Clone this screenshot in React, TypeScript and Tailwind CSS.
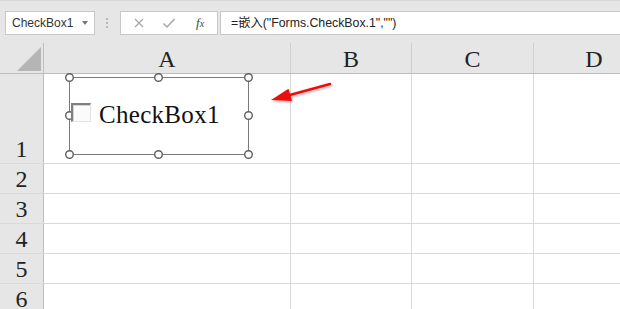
import React from "react";

const serif = { fontFamily: '"Liberation Serif", "Times New Roman", serif' };
const sans = { fontFamily: '"Liberation Sans", Arial, "Noto Sans CJK SC", sans-serif' };

const cols = [
  { label: "A", w: "w-[247px]" },
  { label: "B", w: "w-[121px]" },
  { label: "C", w: "w-[122px]" },
  { label: "D", w: "w-[121px]" },
];

const rows = [
  { n: "1", h: "h-[90px]" },
  { n: "2", h: "h-[30px]" },
  { n: "3", h: "h-[30px]" },
  { n: "4", h: "h-[30px]" },
  { n: "5", h: "h-[30px]" },
  { n: "6", h: "h-[30px]" },
];

function Handle({ x, y }: { x: number; y: number }) {
  return <circle cx={x} cy={y} r={3.8} fill="#fff" stroke="#5f5f5f" strokeWidth={1.4} />;
}

export default function App() {
  return (
    <div className="relative w-[620px] h-[309px] overflow-hidden bg-white" style={sans}>
      {/* Toolbar */}
      <div className="h-[43px] bg-[#e6e6e6] border-t border-[#d6d6d6] flex items-start pt-[10px]">
        <div className="ml-[5px] w-[90px] h-[24px] bg-white border border-[#c8c8c8] flex items-center pl-[6px] pr-[6px]">
          <span className="text-[12px] text-[#333] flex-1">CheckBox1</span>
          <span className="w-0 h-0 border-l-[3.5px] border-r-[3.5px] border-t-[4px] border-l-transparent border-r-transparent border-t-[#777]" />
        </div>
        <div className="ml-[11px] mt-[7px] flex flex-col gap-[2px]">
          <span className="w-[2px] h-[2px] bg-[#b8b8b8]" />
          <span className="w-[2px] h-[2px] bg-[#b8b8b8]" />
          <span className="w-[2px] h-[2px] bg-[#b8b8b8]" />
        </div>
        <div className="ml-[12px] w-[98px] h-[24px] bg-white border border-[#c8c8c8] flex items-center">
          <svg width="12" height="12" viewBox="0 0 12 12" className="ml-[12px]">
            <path d="M2 2 L10 10 M10 2 L2 10" stroke="#a6a6a6" strokeWidth="1.2" />
          </svg>
          <svg width="14" height="12" viewBox="0 0 14 12" className="ml-[17px]">
            <path d="M1.5 6.5 L5 10 L12.5 2" stroke="#a6a6a6" strokeWidth="1.5" fill="none" />
          </svg>
          <span className="ml-[20px] text-[13px] italic text-[#444]" style={serif}>
            f<span className="text-[10px]">x</span>
          </span>
        </div>
        <div className="ml-[2px] flex-1 h-[24px] bg-white border border-[#c8c8c8] border-r-0 flex items-center pl-[10px]">
          <span className="text-[12.3px] text-[#222]" style={{ fontFamily: '"Liberation Sans", Arial, "Noto Sans CJK SC", sans-serif' }}>
            =嵌入("Forms.CheckBox.1","")
          </span>
        </div>
      </div>

      {/* Column header row */}
      <div className="flex h-[31px] bg-[#e6e6e6] border-b border-[#bdbdbd]">
        <div className="w-[44px] shrink-0 border-r border-[#bdbdbd] flex items-end justify-end pr-[1px] pb-[1px]">
          <svg width="25" height="25" viewBox="0 0 25 25">
            <polygon points="24,0 24,24 0,24" fill="#b5b5b5" />
          </svg>
        </div>
        {cols.map((c) => (
          <div
            key={c.label}
            className={`${c.w} shrink-0 border-r border-[#d0d0d0] flex items-end justify-center pb-[1px] text-[24px] leading-[26px] text-[#222]`}
            style={serif}
          >
            {c.label}
          </div>
        ))}
      </div>

      {/* Rows */}
      {rows.map((r) => (
        <div key={r.n} className={`flex ${r.h} border-b border-[#d9d9d9]`}>
          <div
            className="w-[44px] shrink-0 bg-[#e6e6e6] border-r border-[#bdbdbd] flex items-end justify-center text-[24px] leading-[28px] text-[#222]"
            style={serif}
          >
            {r.n}
          </div>
          {cols.map((c) => (
            <div key={c.label} className={`${c.w} shrink-0 border-r border-[#d9d9d9]`} />
          ))}
        </div>
      ))}

      {/* Embedded checkbox control (overlay) */}
      <svg className="absolute left-0 top-0 pointer-events-none" width="620" height="309">
        <rect x="69.5" y="77.5" width="179" height="77" fill="none" stroke="#7a7a7a" strokeWidth="1" />
        <Handle x={69.5} y={77.5} />
        <Handle x={158.5} y={77.5} />
        <Handle x={248.5} y={77.5} />
        <Handle x={69.5} y={115.5} />
        <Handle x={248.5} y={115.5} />
        <Handle x={69.5} y={154.5} />
        <Handle x={158.5} y={154.5} />
        <Handle x={248.5} y={154.5} />
      </svg>
      <div className="absolute left-[71px] top-[103px] w-[20px] h-[19px] bg-white border-t-2 border-l-2 border-t-[#7f7f7f] border-l-[#7f7f7f] border-b border-r border-b-[#e3e3e3] border-r-[#e3e3e3]">
        <div className="w-full h-full border-t border-l border-[#d4d4d4] bg-[#fbfbfb]" />
      </div>
      <div
        className="absolute left-[99px] top-[99px] text-[25px] leading-[32px] text-[#111] tracking-[0.3px]"
        style={serif}
      >
        CheckBox1
      </div>

      {/* Red arrow */}
      <svg className="absolute left-0 top-0 pointer-events-none" width="620" height="309">
        <defs>
          <filter id="sh" x="-20%" y="-50%" width="140%" height="200%">
            <feDropShadow dx="1" dy="1.5" stdDeviation="1.2" floodColor="#000" floodOpacity="0.3" />
          </filter>
        </defs>
        <g filter="url(#sh)">
          <line x1="330" y1="84" x2="288" y2="95.4" stroke="#ee1111" strokeWidth="2.6" strokeLinecap="round" />
          <polygon points="271,100 288.5,88.8 292,101" fill="#ee1111" />
        </g>
      </svg>
    </div>
  );
}
